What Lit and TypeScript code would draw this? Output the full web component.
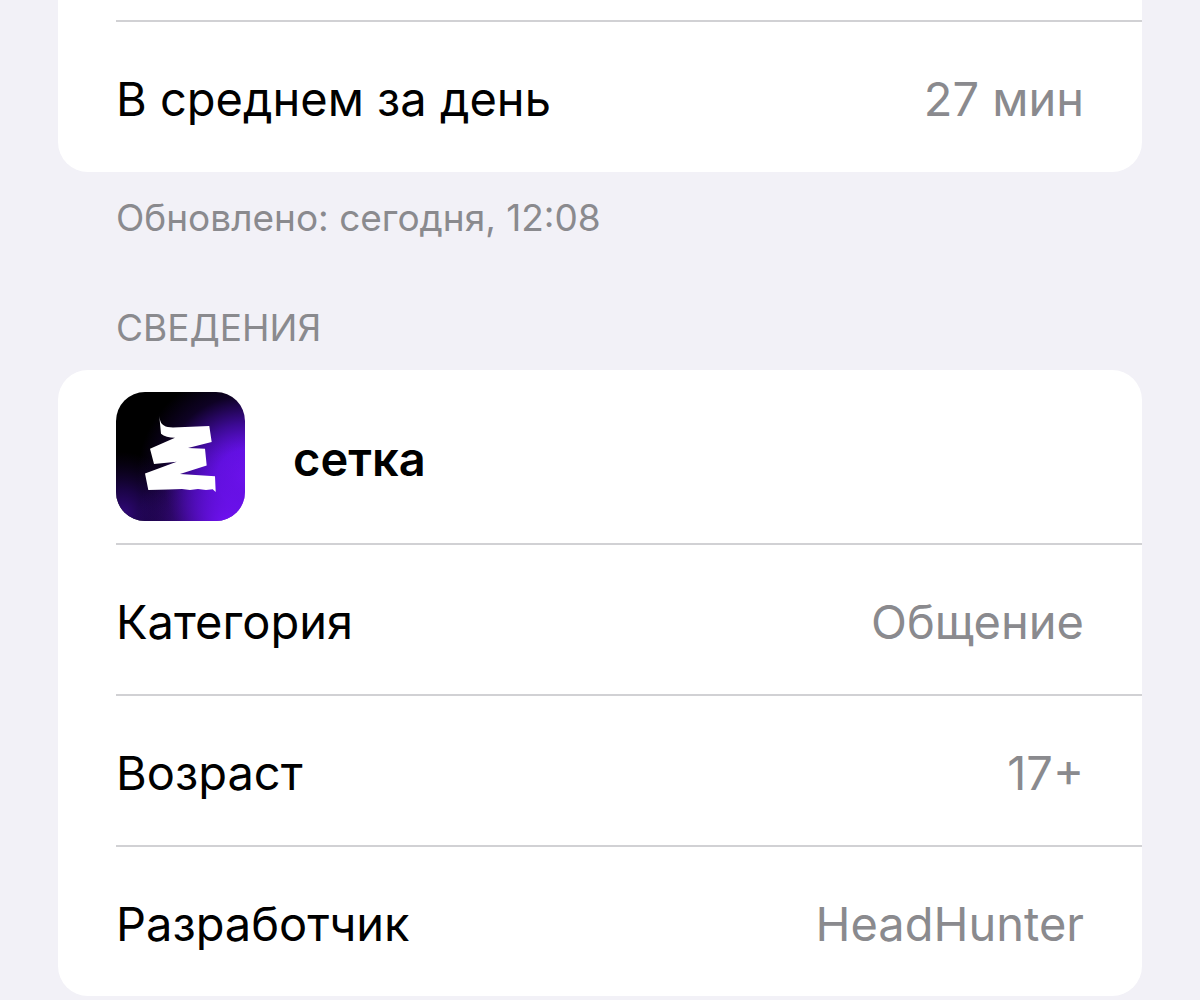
import {LitElement, html, css, svg} from 'lit';
import {customElement, property} from 'lit/decorators.js';

interface InfoItem {
  label: string;
  value: string;
}

const usage: InfoItem[] = [
  {label: 'В среднем за день', value: '27 мин'},
];

const details: InfoItem[] = [
  {label: 'Категория', value: 'Общение'},
  {label: 'Возраст', value: '17+'},
  {label: 'Разработчик', value: 'HeadHunter'},
];

const logo = svg`
  <defs>
    <clipPath id="tile"><rect width="129" height="129" rx="29"/></clipPath>
    <radialGradient id="glow" gradientUnits="userSpaceOnUse" cx="129" cy="86" r="108">
      <stop offset="0" stop-color="#7614ff"/>
      <stop offset=".26" stop-color="#6611ea"/>
      <stop offset=".5" stop-color="#3c0a94"/>
      <stop offset=".76" stop-color="#0e0224"/>
      <stop offset="1" stop-color="#000"/>
    </radialGradient>
    <radialGradient id="corner" gradientUnits="userSpaceOnUse" cx="6" cy="122" r="62">
      <stop offset="0" stop-color="#32087c"/>
      <stop offset=".4" stop-color="#28066a" stop-opacity=".65"/>
      <stop offset="1" stop-color="#1a0440" stop-opacity="0"/>
    </radialGradient>
    <radialGradient id="base" gradientUnits="userSpaceOnUse" cx="112" cy="134" r="92">
      <stop offset="0" stop-color="#7412fa"/>
      <stop offset="1" stop-color="#4a0cb0" stop-opacity="0"/>
    </radialGradient>
  </defs>
  <g clip-path="url(#tile)">
    <rect width="129" height="129" fill="url(#glow)"/>
    <rect width="129" height="129" fill="url(#corner)"/>
    <rect width="129" height="129" fill="url(#base)"/>
  </g>
  <path fill="#fff" d="M43.3 24C44 29 45 32 48 33.5C50 35 53 35.3 57 35.5L93.3 34L95.7 50L72 56L89 56.7L90.7 73.5L64 82L99 84.3L99.7 100L96.7 97.3L90 98L82 97L74 98L66 97L52 97.6L32.3 98L29 81.5L60.7 69.7L38 72L34 56.7L59 45.7C53 45.5 48 44.5 45 41.7Z"/>
`;

@customElement('info-row')
export class InfoRow extends LitElement {
  @property() label = '';
  @property() value = '';

  static styles = css`
    :host {
      display: flex;
      justify-content: space-between;
      align-items: center;
      gap: 24px;
      box-sizing: border-box;
      min-height: 151px;
      margin-left: 58px;
      padding: 4px 58px 0 0;
      border-top: 2px solid #d1d1d4;
    }

    .label {
      color: #000;
    }

    .value {
      color: #8a8a8e;
      text-align: right;
    }
  `;

  render() {
    return html`
      <span class="label">${this.label}</span>
      <span class="value">${this.value}</span>
    `;
  }
}

@customElement('app-root')
export class AppRoot extends LitElement {
  static styles = css`
    :host {
      display: block;
      box-sizing: border-box;
      min-height: 100vh;
      padding: 0 58px 4px;
      background: #f2f1f7;
      font-family: Inter, "Liberation Sans", sans-serif;
      font-size: 47px;
      line-height: 58px;
    }

    .card {
      background: #fff;
      border-radius: 30px;
    }

    .card.continued {
      padding: 20px 0 1px;
      border-radius: 0 0 30px 30px;
    }

    .note,
    h2 {
      margin: 0;
      padding: 0 58px;
      color: #8a8a8e;
      font-size: 37px;
      font-weight: 400;
      line-height: 46px;
    }

    .note {
      padding-top: 23px;
    }

    h2 {
      padding-top: 64px;
      padding-bottom: 19px;
      text-transform: uppercase;
    }

    .app {
      display: flex;
      align-items: center;
      gap: 48px;
      box-sizing: border-box;
      min-height: 173px;
      padding: 0 58px;
    }

    .logo {
      flex: none;
      width: 129px;
      height: 129px;
    }

    .name {
      padding-top: 4px;
      font-weight: 600;
    }
  `;

  renderRows(items: InfoItem[]) {
    return items.map(
      (item) => html`<info-row .label=${item.label} .value=${item.value}></info-row>`
    );
  }

  render() {
    return html`
      <section>
        <div class="card continued">${this.renderRows(usage)}</div>
        <p class="note">Обновлено: сегодня, 12:08</p>
      </section>
      <section>
        <h2>Сведения</h2>
        <div class="card">
          <div class="app">
            <svg class="logo" viewBox="0 0 129 129" aria-hidden="true">${logo}</svg>
            <span class="name">сетка</span>
          </div>
          ${this.renderRows(details)}
        </div>
      </section>
    `;
  }
}
